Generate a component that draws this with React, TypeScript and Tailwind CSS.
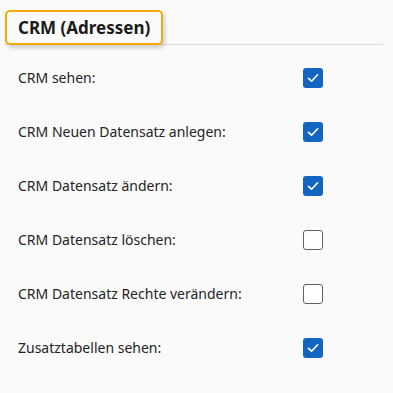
import React from "react";

const rows: [string, boolean][] = [
  ["CRM sehen:", true],
  ["CRM Neuen Datensatz anlegen:", true],
  ["CRM Datensatz ändern:", true],
  ["CRM Datensatz löschen:", false],
  ["CRM Datensatz Rechte verändern:", false],
  ["Zusatztabellen sehen:", true],
];

function Box({ checked }: { checked: boolean }) {
  if (checked) {
    return (
      <div className="w-[20px] h-[20px] rounded-[3px] bg-[#1266c1] flex items-center justify-center">
        <svg width="14" height="14" viewBox="0 0 14 14" fill="none">
          <path d="M2.5 7.3 L5.6 10.2 L11.6 3.8" stroke="white" strokeWidth="1.6" strokeLinecap="round" strokeLinejoin="round" />
        </svg>
      </div>
    );
  }
  return <div className="w-[20px] h-[20px] rounded-[3px] border border-[#616161] bg-white" />;
}

export default function App() {
  return (
    <div
      className="w-[393px] h-[393px] bg-[#fafafa] text-[#242424] overflow-hidden"
      style={{ fontFamily: '"Segoe UI", "Noto Sans", "Open Sans", sans-serif' }}
    >
      <div className="pt-[10px] pl-[5px] pr-[10px]">
        <div className="border-b border-[#dcdcdc] flex">
          <div className="border-2 border-[#f5a90a] rounded-[5px] px-[11px] h-[35px] -mb-px flex items-center shadow-[2px_3px_4px_rgba(0,0,0,0.18)] bg-[#fafafa]">
            <span className="text-[17px] font-bold text-[#1b1b1b] leading-none">CRM (Adressen)</span>
          </div>
        </div>
      </div>
      <div className="pt-[6px] pl-[18px]">
        {rows.map(([label, checked]) => (
          <div key={label} className="h-[54px] flex items-center">
            <span className="w-[285px] text-[14px] leading-none">{label}</span>
            <Box checked={checked} />
          </div>
        ))}
      </div>
    </div>
  );
}
